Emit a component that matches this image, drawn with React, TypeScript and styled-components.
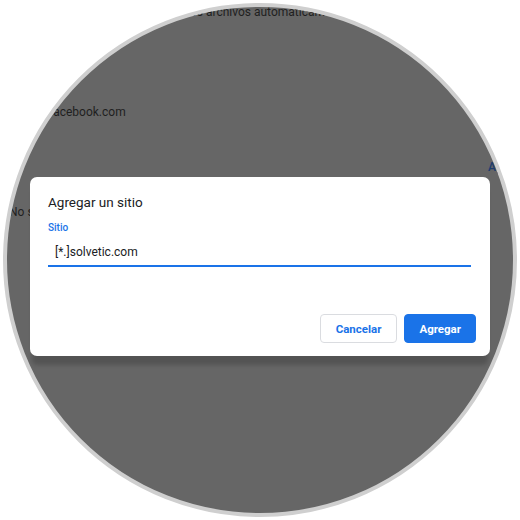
import styled, {createGlobalStyle} from 'styled-components';

const GlobalStyle = createGlobalStyle`
    html, body {
        margin: 0;
        padding: 0;
        background: #ffffff;
        font-family: Roboto, "Liberation Sans", Arial, sans-serif;
    }
`;

const Lens = styled.div`
    position: relative;
    width: 506px;
    height: 506px;
    margin: 3px;
    border: 4px solid #cfcfcf;
    border-radius: 50%;
    background: #666666;
    overflow: hidden;
`;

const Page = styled.div`
    display: flex;
    flex-direction: column;
    color: #1f1f1f;
    font-size: 12px;
    line-height: 16px;
`;

const PageLine = styled.div<{$top: number; $left: number; $link?: boolean}>`
    margin-top: ${(p) => p.$top}px;
    padding-left: ${(p) => p.$left}px;
    white-space: nowrap;
    color: ${(p) => (p.$link ? '#1d3c6e' : '#1f1f1f')};
    font-weight: ${(p) => (p.$link ? 500 : 400)};
`;

const Overlay = styled.div`
    position: absolute;
    inset: 0;
    display: flex;
    justify-content: center;
    align-items: flex-start;
    padding-top: 170px;
`;

const Dialog = styled.div`
    width: 460px;
    box-sizing: border-box;
    padding: 15px 14px 13px 18px;
    background: #ffffff;
    border-radius: 7px;
    box-shadow: 0 11px 4px -2px rgba(0, 0, 0, 0.18);
    display: flex;
    flex-direction: column;
`;

const Title = styled.h2`
    margin: 0;
    font-size: 13.5px;
    line-height: 20px;
    font-weight: 400;
    color: #202124;
`;

const Label = styled.label`
    margin-top: 9px;
    font-size: 10px;
    line-height: 14px;
    font-weight: 500;
    color: #1a73e8;
`;

const Input = styled.input`
    margin-top: 4px;
    width: 423px;
    height: 28px;
    box-sizing: border-box;
    padding: 0 7px;
    border: none;
    border-bottom: 2px solid #1a73e8;
    border-radius: 2px 2px 0 0;
    background: #ffffff;
    font-family: Roboto, "Liberation Sans", Arial, sans-serif;
    font-size: 12px;
    color: #202124;
    outline: none;
`;

const Actions = styled.div`
    margin-top: 47px;
    display: flex;
    justify-content: flex-end;
    gap: 7px;
`;

const Button = styled.button<{$primary?: boolean}>`
    height: 29px;
    padding: 0 ${(p) => (p.$primary ? 14 : 15)}px;
    box-sizing: border-box;
    border-radius: 4px;
    border: 1px solid ${(p) => (p.$primary ? '#1a73e8' : '#dadce0')};
    background: ${(p) => (p.$primary ? '#1a73e8' : '#ffffff')};
    color: ${(p) => (p.$primary ? '#ffffff' : '#1a73e8')};
    font-family: Roboto, "Liberation Sans", Arial, sans-serif;
    font-size: 11.5px;
    font-weight: 700;
    cursor: pointer;
`;

export default function App() {
    return (
        <>
            <GlobalStyle/>
            <Lens>
                <Page>
                    <PageLine $top={-3} $left={180}>los archivos automáticamente</PageLine>
                    <PageLine $top={84} $left={42}>facebook.com</PageLine>
                    <PageLine $top={39} $left={481} $link>Agregar</PageLine>
                    <PageLine $top={29} $left={2}>No se agregó ningún sitio</PageLine>
                </Page>
                <Overlay>
                    <Dialog>
                        <Title>Agregar un sitio</Title>
                        <Label>Sitio</Label>
                        <Input defaultValue="[*.]solvetic.com"/>
                        <Actions>
                            <Button>Cancelar</Button>
                            <Button $primary>Agregar</Button>
                        </Actions>
                    </Dialog>
                </Overlay>
            </Lens>
        </>
    );
}
